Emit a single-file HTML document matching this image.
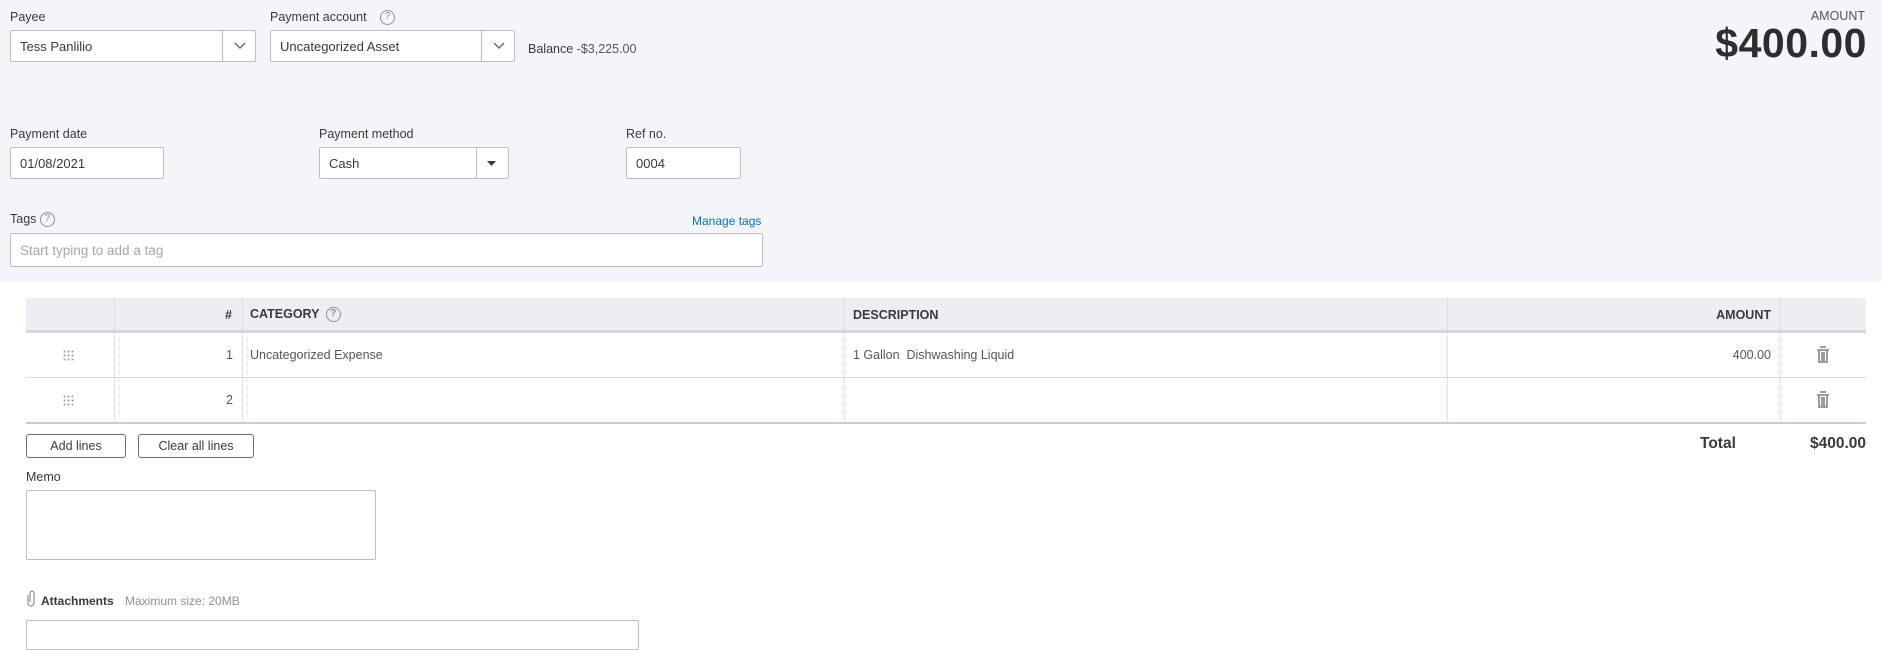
<!DOCTYPE html>
<html><head><style>
*{box-sizing:border-box;margin:0;padding:0}
body{width:1882px;height:638px;overflow:hidden;background:#fff;font-family:"Liberation Sans",sans-serif;color:#393a3d;position:relative;font-size:13px}
.a{position:absolute}
.bg{left:0;top:0;width:1882px;height:282px;background:#f4f5f8}
.lbl{font-size:12.5px;color:#393a3d}
.box{background:#fff;border:1px solid #babec5;border-radius:2px;font-size:13px;padding-left:9px;display:flex;align-items:center;color:#393a3d}
.div{position:absolute;top:0;bottom:0;border-left:1px solid #babec5}
.q{display:inline-block;width:15px;height:15px;border:1.3px solid #8d9096;border-radius:50%;font-size:10px;line-height:12px;text-align:center;color:#8d9096;vertical-align:middle}
.th{top:298px;height:35px;background:#eceef1;border-bottom:3px solid #d4d7dc}
.cell{position:absolute;font-size:12.5px}
.vl{position:absolute;top:298px;height:125px;border-left:1px dotted #c9ccd1}
.hl{position:absolute;left:26px;width:1840px}
.btn{border:1px solid #6b6c72;border-radius:3px;background:#fff;font-size:12.5px;display:flex;align-items:center;justify-content:center;color:#393a3d}
</style></head><body>
<div class="a bg"></div>
<div class="a lbl" style="left:10px;top:10px">Payee</div>
<div class="a box" style="left:10px;top:30px;width:246px;height:32px">Tess Panlilio<div class="div" style="left:211px"></div><svg class="a" style="left:222px;top:10px" width="14" height="10"><path d="M2 2l5 5 5-5" stroke="#6b6c72" stroke-width="1.5" fill="none"/></svg></div>
<div class="a lbl" style="left:270px;top:10px">Payment account <span class="q" style="margin-left:10px">?</span></div>
<div class="a box" style="left:270px;top:30px;width:245px;height:32px">Uncategorized Asset<div class="div" style="left:210px"></div><svg class="a" style="left:221px;top:10px" width="14" height="10"><path d="M2 2l5 5 5-5" stroke="#6b6c72" stroke-width="1.5" fill="none"/></svg></div>
<div class="a" style="left:528px;top:42px;font-size:12.5px">Balance <span style="color:#555">-$3,225.00</span></div>
<div class="a" style="right:17px;top:9px;font-size:12.5px;color:#555">AMOUNT</div>
<div class="a" style="right:15px;top:20px;font-size:41px;font-weight:bold;color:#2c2d30;letter-spacing:0.5px">$400.00</div>
<div class="a lbl" style="left:10px;top:127px">Payment date</div>
<div class="a box" style="left:10px;top:147px;width:154px;height:32px">01/08/2021</div>
<div class="a lbl" style="left:319px;top:127px">Payment method</div>
<div class="a box" style="left:319px;top:147px;width:190px;height:32px">Cash<div class="div" style="left:156px"></div><svg class="a" style="left:166px;top:12px" width="12" height="8"><path d="M1 1h9l-4.5 5z" fill="#393a3d"/></svg></div>
<div class="a lbl" style="left:626px;top:127px">Ref no.</div>
<div class="a box" style="left:626px;top:147px;width:115px;height:32px">0004</div>
<div class="a lbl" style="left:10px;top:212px">Tags <span class="q">?</span></div>
<div class="a" style="left:692px;top:214px;font-size:12px;color:#0a6ebd">Manage tags</div>
<div class="a box" style="left:10px;top:233px;width:753px;height:34px;color:#a4a7ad;font-size:13.5px">Start typing to add a tag</div>

<div class="a th" style="left:26px;width:1840px"></div>
<div class="vl" style="left:114px"></div><div class="vl" style="left:242px"></div><div class="vl" style="left:844px"></div><div class="vl" style="left:1447px"></div><div class="vl" style="left:1780px"></div>
<div class="cell" style="left:225px;top:308px;font-weight:bold">#</div>
<div class="cell" style="left:250px;top:307px;font-weight:bold;font-size:12.5px">CATEGORY <span class="q" style="margin-left:3px">?</span></div>
<div class="cell" style="left:853px;top:308px;font-weight:bold;font-size:12.5px">DESCRIPTION</div>
<div class="cell" style="left:1690px;top:308px;font-weight:bold;font-size:12.5px;width:81px;text-align:right">AMOUNT</div>
<div class="hl" style="top:377px;border-top:1px solid #d4d7dc"></div>
<div class="hl" style="top:422px;border-top:2px solid #c9ccd1"></div>
<svg class="a" style="left:63px;top:350px" width="11" height="11"><g fill="#999"><circle cx="1.5" cy="1.5" r="1"/><circle cx="5.5" cy="1.5" r="1"/><circle cx="9.5" cy="1.5" r="1"/><circle cx="1.5" cy="5.5" r="1"/><circle cx="5.5" cy="5.5" r="1"/><circle cx="9.5" cy="5.5" r="1"/><circle cx="1.5" cy="9.5" r="1"/><circle cx="5.5" cy="9.5" r="1"/><circle cx="9.5" cy="9.5" r="1"/></g></svg>
<svg class="a" style="left:63px;top:395px" width="11" height="11"><g fill="#999"><circle cx="1.5" cy="1.5" r="1"/><circle cx="5.5" cy="1.5" r="1"/><circle cx="9.5" cy="1.5" r="1"/><circle cx="1.5" cy="5.5" r="1"/><circle cx="5.5" cy="5.5" r="1"/><circle cx="9.5" cy="5.5" r="1"/><circle cx="1.5" cy="9.5" r="1"/><circle cx="5.5" cy="9.5" r="1"/><circle cx="9.5" cy="9.5" r="1"/></g></svg>
<div class="cell" style="left:226px;top:348px;color:#555">1</div>
<div class="cell" style="left:226px;top:393px;color:#555">2</div>
<div class="cell" style="left:250px;top:348px;color:#555">Uncategorized Expense</div>
<div class="cell" style="left:853px;top:348px;color:#555">1 Gallon&nbsp; Dishwashing Liquid</div>
<div class="cell" style="left:1700px;top:348px;width:71px;text-align:right;color:#555">400.00</div>
<svg class="a" style="left:1816px;top:346px" width="14" height="17"><path d="M4 1h6M1 4h12M3 5v11h8V5M6 6v9M8 6v9" stroke="#8d9096" stroke-width="1.8" fill="none"/></svg>
<svg class="a" style="left:1816px;top:391px" width="14" height="17"><path d="M4 1h6M1 4h12M3 5v11h8V5M6 6v9M8 6v9" stroke="#8d9096" stroke-width="1.8" fill="none"/></svg>
<div class="a btn" style="left:26px;top:434px;width:100px;height:24px">Add lines</div>
<div class="a btn" style="left:138px;top:434px;width:116px;height:24px">Clear all lines</div>
<div class="a" style="left:1700px;top:435px;font-weight:bold;font-size:15.5px">Total</div>
<div class="a" style="right:16px;top:435px;font-weight:bold;font-size:15.5px">$400.00</div>
<div class="a lbl" style="left:26px;top:470px">Memo</div>
<div class="a" style="left:26px;top:490px;width:350px;height:70px;border:1px solid #babec5;border-radius:2px"></div>
<svg class="a" style="left:26px;top:590px" width="10" height="18"><path d="M2 5v8a3 3 0 006 0V3a2 2 0 00-4 0v9" stroke="#8d9096" stroke-width="1.2" fill="none"/></svg>
<div class="a" style="left:41px;top:594px;font-size:12px;font-weight:bold">Attachments <span style="font-weight:normal;color:#8d9096;margin-left:8px">Maximum size: 20MB</span></div>
<div class="a" style="left:26px;top:620px;width:613px;height:30px;border:1px solid #babec5;border-radius:2px"></div>
</body></html>
